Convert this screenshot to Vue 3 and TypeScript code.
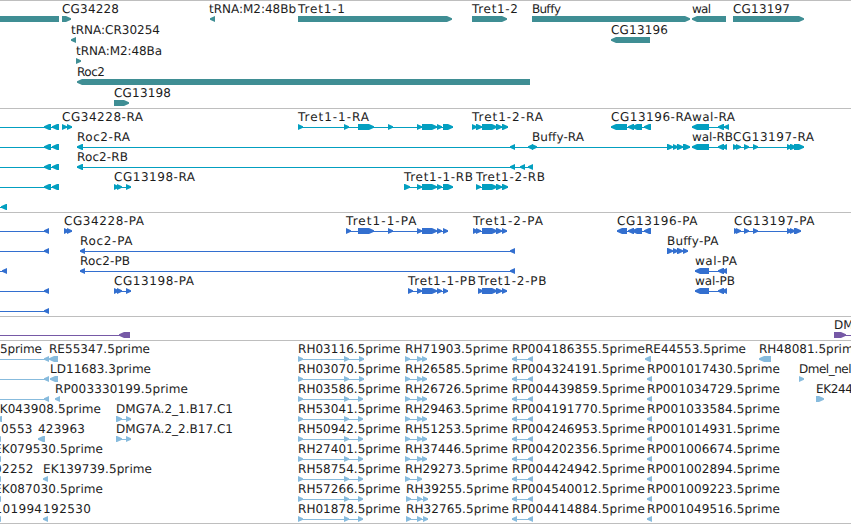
<script setup lang="ts">
  // an exon runs from its tail to its arrow tip, so [59, 52] points left
  type Exon = [number, number]

  interface Feature {
    name?: string
    x?: number
    end?: number
    exons: Exon[]
  }

  interface Track {
    id: string
    height: number
    pitch: number
    rows: Feature[][]
  }

  const VIEW_WIDTH = 851
  const TIP = 5
  const OUT_LEFT = -20

  const f = (name: string, x: number, end: number, ...exons: Exon[]): Feature => ({
    name,
    x,
    end,
    exons,
  })
  const bare = (...exons: Exon[]): Feature => ({ exons })

  const offLeft: Exon = [OUT_LEFT + 6, OUT_LEFT]

  const rnaLeft = bare(offLeft, [51, 44], [59, 52])
  const cdsLeft = bare(offLeft, [49, 44])
  const tret11: Exon[] = [
    [417, 422],
    [422, 437],
    [437, 442],
  ]
  const tret12: Exon[] = [
    [482, 497],
    [496, 502],
  ]

  const rh = (id: string, last = 363) =>
    f(`RH${id}.5prime`, 298, 400.5, [298, 303], [344, 349], [last - 5, last])
  const rhShort = (id: string, x = 405) =>
    f(`RH${id}.5prime`, x, x + 103, [x, x + 5], [417, 422], [x + 17, x + 22])
  const rp = (id: string) =>
    f(`RP${id}.5prime`, 512, 645, [517, 512], [533, 528])
  const rpShort = (id: string) => f(`RP${id}.5prime`, 647, 780, [652, 647])

  const tracks: Track[] = [
    {
      id: 'gene',
      height: 108,
      pitch: 21,
      rows: [
        [
          bare([59, OUT_LEFT]),
          f('CG34228', 62, 119, [62, 71]),
          f('tRNA:M2:48Bb', 209, 296, [215, 210]),
          f('Tret1-1', 298, 345, [298, 452]),
          f('Tret1-2', 472, 518, [472, 507]),
          f('Buffy', 532, 561, [532, 690]),
          f('wal', 692, 711, [726, 692]),
          f('CG13197', 733, 790, [733, 804]),
        ],
        [
          f('tRNA:CR30254', 71, 160, [76, 71]),
          f('CG13196', 611, 668, [650, 611]),
        ],
        [f('tRNA:M2:48Ba', 76, 162, [76, 81])],
        [f('Roc2', 77, 105, [530, 77])],
        [f('CG13198', 114, 171, [114, 129])],
      ],
    },
    {
      id: 'rna',
      height: 104,
      pitch: 20,
      rows: [
        [
          rnaLeft,
          f('CG34228-RA', 62, 143, [62, 67], [67, 72]),
          f('Tret1-1-RA', 298, 369, [298, 303], [344, 349], [358, 374], [388, 393], ...tret11, [443, 453]),
          f('Tret1-2-RA', 472, 543, [472, 477], [476, 482], ...tret12, [502, 508]),
          f('CG13196-RA', 611, 692, [627, 611], [634, 628], [642, 632], [651, 644]),
          f('wal-RA', 692, 735, [709, 692], [724, 718], [729, 724]),
        ],
        [
          rnaLeft,
          f('Roc2-RA', 77, 130, [83, 77], [515, 510], [533, 528]),
          f('Buffy-RA', 532, 584, [532, 537], [667, 673], [673, 678], [677, 683], [683, 690]),
          f('wal-RB', 692, 733, [709, 692], [724, 718], [727, 722]),
          f('CG13197-RA', 733, 814, [733, 738], [736, 741], [744, 749], [753, 758], [787, 792], [790, 796], [794, 804]),
        ],
        [
          rnaLeft,
          f('Roc2-RB', 77, 128, [83, 77], [515, 510], [525, 520], [533, 528]),
        ],
        [
          rnaLeft,
          f('CG13198-RA', 114, 195, [114, 119], [117, 122], [126, 131]),
          f('Tret1-1-RB', 404, 473, [404, 410], ...tret11, [443, 453]),
          f('Tret1-2-RB', 476, 545, [476, 481], ...tret12, [502, 508]),
        ],
        [bare(offLeft, [7, 1])],
      ],
    },
    {
      id: 'cds',
      height: 104,
      pitch: 20,
      rows: [
        [
          cdsLeft,
          f('CG34228-PA', 64, 144, [64, 69], [67, 72]),
          f('Tret1-1-PA', 346, 416.5, [346, 351], [358, 374], [388, 393], ...tret11, [443, 448]),
          f('Tret1-2-PA', 473, 543, [473, 478], [476, 481], ...tret12, [502, 507]),
          f('CG13196-PA', 617, 697.5, [627, 617], [634, 628], [642, 632], [651, 644]),
          f('CG13197-PA', 734, 814.5, [734, 739], [736, 741], [744, 749], [753, 758], [787, 792], [790, 795], [794, 801]),
        ],
        [
          cdsLeft,
          f('Roc2-PA', 80, 132.5, [85, 80], [515, 510]),
          f('Buffy-PA', 667, 718.5, [667, 673], [673, 678], [677, 683], [683, 688]),
        ],
        [
          bare(offLeft, [7, 2]),
          f('Roc2-PB', 80, 130, [85, 80], [515, 510]),
          f('wal-PA', 695, 737, [709, 695], [724, 718], [727, 722]),
        ],
        [
          cdsLeft,
          f('CG13198-PA', 114, 194, [114, 119], [117, 122], [126, 131]),
          f('Tret1-1-PB', 408, 476, [408, 413], ...tret11, [443, 448]),
          f('Tret1-2-PB', 478, 546.5, [478, 483], ...tret12, [502, 507]),
          f('wal-PB', 695, 735, [709, 695], [724, 718], [727, 722]),
        ],
        [cdsLeft],
      ],
    },
    {
      id: 'noncoding',
      height: 24,
      pitch: 20,
      rows: [
        [
          bare(offLeft, [130, 119]),
          { name: 'DM', x: 834, exons: [[834, 846], [870, 875]] },
        ],
      ],
    },
    {
      id: 'est',
      height: 184,
      pitch: 20,
      rows: [
        [
          f('5prime', 0, 42, offLeft, [49, 44]),
          f('RE55347.5prime', 49, 150, [58, 49]),
          rh('03116', 364),
          rhShort('71903'),
          rp('004186355'),
          f('RE44553.5prime', 645, 746, [651, 645]),
          f('RH48081.5prime', 759, 861, [771, 759]),
        ],
        [
          cdsLeft,
          f('LD11683.3prime', 50, 151, [58, 50]),
          rh('03070', 364),
          rhShort('26585'),
          rp('004324191'),
          rpShort('001017430'),
          f('Dmel_nel', 799, 851.5, [799, 804]),
        ],
        [
          cdsLeft,
          f('RP003330199.5prime', 55, 188, [60, 55]),
          rh('03586'),
          rhShort('26726'),
          rp('004439859'),
          rpShort('001034729'),
          f('EK244', 816, 853, [816, 824]),
        ],
        [
          f('EK043908.5prime', -8, 101, [2, -4]),
          f('DMG7A.2_1.B17.C1', 116, 233, [116, 122], [126, 131]),
          rh('53041'),
          rhShort('29463'),
          rp('004191770'),
          rpShort('001033584'),
        ],
        [
          f('0553', 1, 32.5, [1, -4]),
          f('423963', 38, 85, [45, 38]),
          f('DMG7A.2_2.B17.C1', 116, 233, [116, 122], [126, 131]),
          rh('50942'),
          rhShort('51253'),
          rp('004246953'),
          rpShort('001014931'),
        ],
        [
          f('EK079530.5prime', -6, 103, [1, -4]),
          rh('27401'),
          rhShort('37446'),
          rp('004202356'),
          rpShort('001006674'),
        ],
        [
          f('02252', -6, 33.5, [1, -4]),
          f('EK139739.5prime', 43, 152, [48, 43]),
          rh('58754'),
          f('RH29273.5prime', 405, 508, [405, 410], [417, 422]),
          rp('004424942'),
          rpShort('001002894'),
        ],
        [
          f('EK087030.5prime', -6, 103, [1, -4]),
          rh('57266'),
          rhShort('39255', 406),
          rp('004540012'),
          rpShort('001009223'),
        ],
        [
          f('101994', -5.5, 42, [1, -4]),
          f('192530', 43, 91, [48, 43]),
          rh('01878'),
          rhShort('32765', 406),
          rp('004414884'),
          rpShort('001049516'),
        ],
      ],
    },
  ]

  const exonPath = ([tail, tip]: Exon) => {
    const neck = tip > tail ? Math.max(tail, tip - TIP) : Math.min(tail, tip + TIP)
    return `M${tail} 16H${neck}L${tip} 18.2V19.8L${neck} 22H${tail}Z`
  }

  const start = (feature: Feature) => Math.min(...feature.exons.flat())
  const span = (feature: Feature) =>
    Math.max(...feature.exons.flat()) - start(feature)

  const labelLength = (feature: Feature) =>
    feature.end === undefined ? undefined : feature.end - (feature.x ?? 0)
</script>

<template>
  <main class="browser">
    <section
      v-for="track in tracks"
      :key="track.id"
      class="track"
      :class="track.id"
    >
      <svg :width="VIEW_WIDTH" :height="track.height - 1" :viewBox="`0 1 ${VIEW_WIDTH} ${track.height - 1}`">
        <g
          v-for="(row, i) in track.rows"
          :key="i"
          :transform="`translate(0 ${i * track.pitch})`"
        >
          <g v-for="(feature, j) in row" :key="j">
            <rect
              v-if="feature.exons.length > 1"
              class="intron"
              :x="start(feature)"
              y="19"
              :width="span(feature)"
              height="1"
            />
            <path
              v-for="(exon, k) in feature.exons"
              :key="k"
              :d="exonPath(exon)"
            />
            <text
              v-if="feature.name"
              :x="feature.x"
              y="13"
              :textLength="labelLength(feature)"
            >{{ feature.name }}</text>
          </g>
        </g>
      </svg>
    </section>
  </main>
</template>

<style>
  body {
    background: #fff;
    overflow: hidden;
  }
</style>

<style scoped>
  .browser {
    display: flex;
    flex-direction: column;
    width: 851px;
    height: 524px;
    overflow: hidden;
  }

  .track {
    border-top: 1px solid #bebebe;
  }
  .track:last-child {
    height: 182px;
    border-bottom: 1px solid #bebebe;
    overflow: hidden;
  }

  svg {
    display: block;
  }
  text {
    font-family: 'DejaVu Sans', sans-serif;
    font-size: 12px;
    fill: #1c1c1c;
    text-rendering: geometricPrecision;
  }

  .intron {
    shape-rendering: crispEdges;
  }

  .gene {
    fill: #3f8e94;
  }
  .rna {
    fill: #039fc0;
  }
  .cds {
    fill: #336fcf;
  }
  .noncoding {
    fill: #7659a6;
  }
  .est {
    fill: #87bbdd;
  }
</style>
